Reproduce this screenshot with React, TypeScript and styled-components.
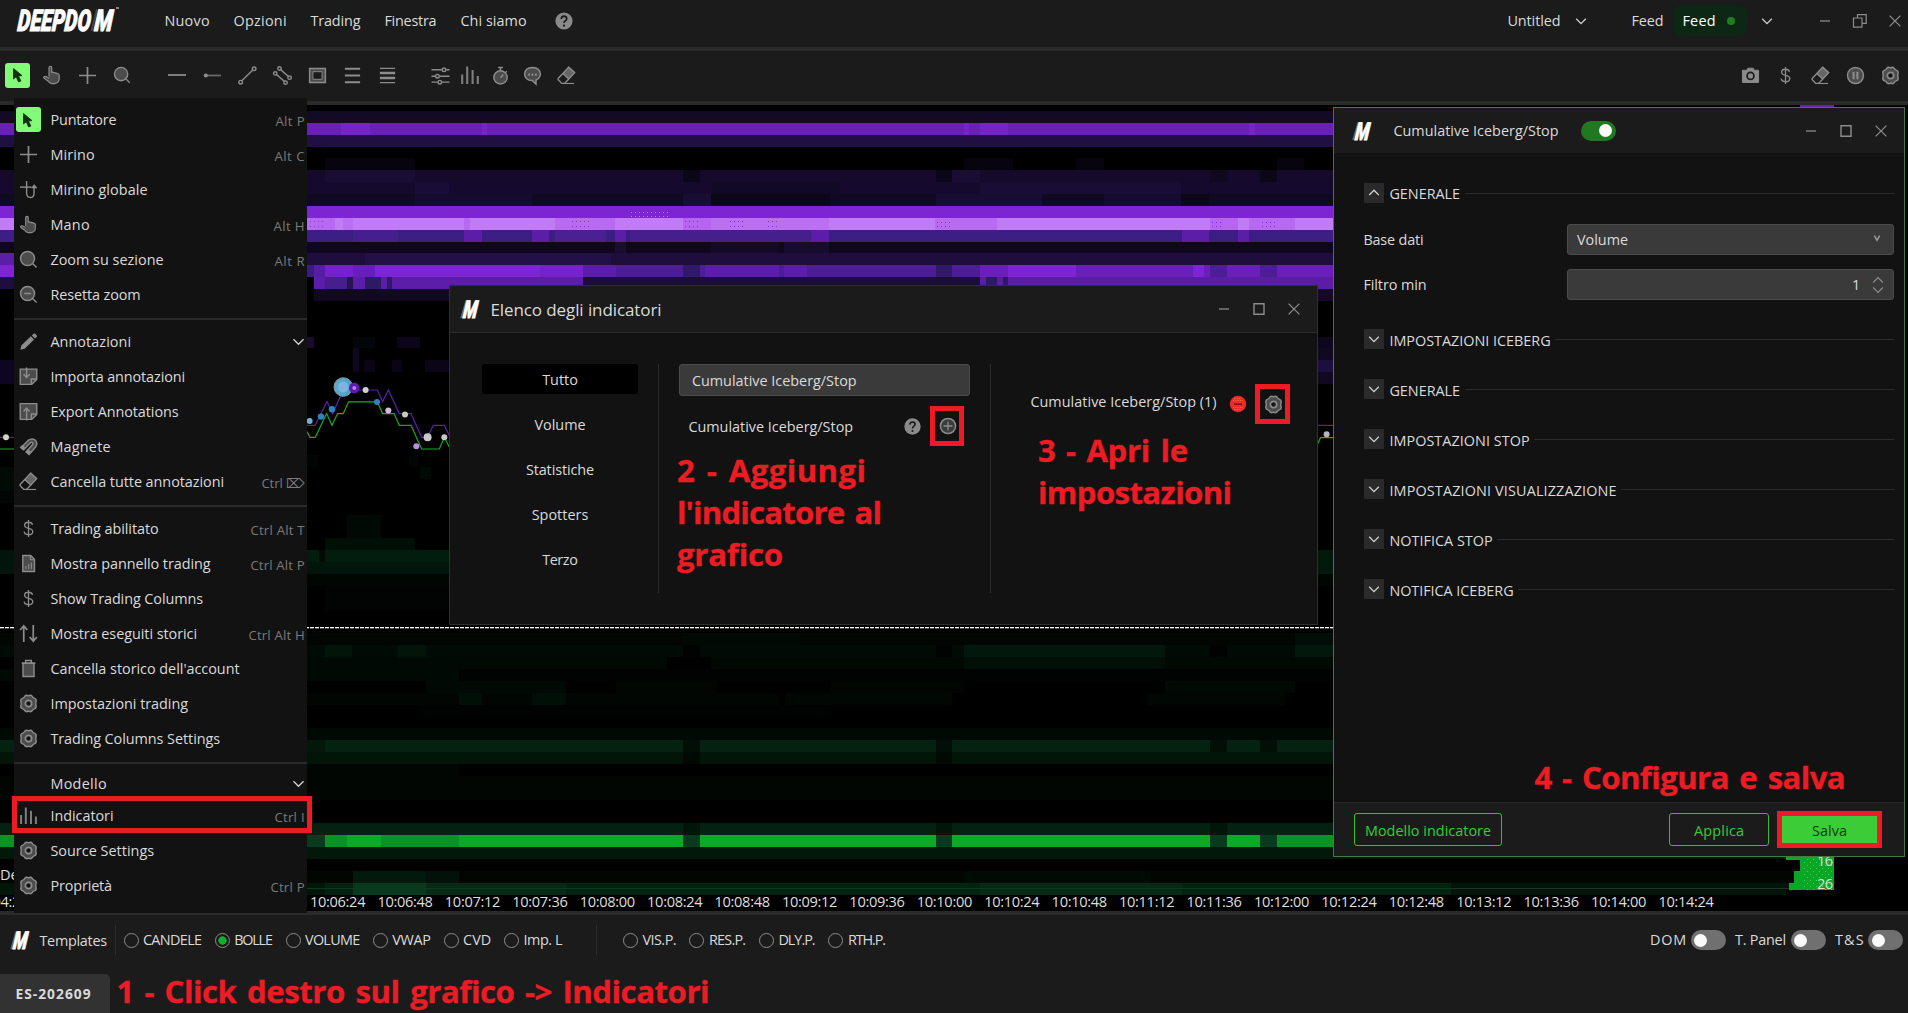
import React, { useLayoutEffect, useRef, useState } from 'react';
import styled, { createGlobalStyle } from 'styled-components';

const RED = '#ed1c24';
const UI_FONT = '"Open Sans", "Noto Sans", "DejaVu Sans", sans-serif';

const GlobalStyle = createGlobalStyle`
  html, body { margin: 0; padding: 0; background: #000; overflow: hidden; }
  * { box-sizing: border-box; }
  body { font-family: ${UI_FONT}; font-size: 14.4px; color: #dadada; }
`;

/* ---------- text set to a fixed measure ---------- */

const MeasureBox = styled.span<{ $w: number }>`
  display: block;
  flex: none;
  width: ${(p) => p.$w}px;
  text-indent: -0.6px;
  white-space: pre;
`;

function Fit({ w, children }: { w: number; children: string }) {
  const ref = useRef<HTMLSpanElement>(null);
  const [spacing, setSpacing] = useState(0);
  useLayoutEffect(() => {
    if (!ref.current) return;
    const natural = ref.current.getBoundingClientRect().width;
    setSpacing((w + 1.2 - natural) / Math.max(1, children.length - 1));
  }, [w, children]);
  return (
    <MeasureBox $w={w}>
      <span ref={ref} style={{ letterSpacing: spacing }}>{children}</span>
    </MeasureBox>
  );
}

/* ---------- icons ---------- */

const Icon = styled.svg<{ $size?: number }>`
  display: block;
  flex: none;
  width: ${(p) => p.$size ?? 20}px;
  height: ${(p) => p.$size ?? 20}px;
  fill: none;
  stroke: #8c8c8c;
  stroke-width: 1.5;
  overflow: visible;
`;

const SOFT = '#4c4c4c';

const glyphs: Record<string, React.ReactNode> = {
  pointer: (
    <path d="M5.5 3.5 L5.5 14 L8.2 11.8 L10.6 17 L12.9 16 L10.5 11 L14 10.6 Z" fill="#10300f" stroke="#10300f" strokeWidth="0.8" />
  ),
  hand: (
    <path
      d="M7 11.5 V3 q0-1.6 1.4-1.6 q1.3 0 1.3 1.6 V7.4 q1.2-.6 2 .3 q1.2-.5 2 .5 q1.2-.4 2 .7 q1.4-.2 1.5 1.4 V14 q-.3 4-4.5 4.6 H9.6 Q7.4 18.2 6 16 L2 13.2 q-.8-1.3.4-1.7 q1.4-.3 2.6.5 L7 13.2"
      fill={SOFT}
      strokeWidth="1.2"
    />
  ),
  plus: <path d="M10 1 V19 M1 10 H19" strokeWidth="1.8" />,
  globalCross: (
    <>
      <path d="M8 1 V14 q.3 4.4 4 4.4 q3.6 0 3.8-4 V7" />
      <path d="M1 7.5 H13" />
      <path d="M13 8.5 L16 4.8 L19 8.5 Z" fill="#8c8c8c" strokeWidth=".6" />
    </>
  ),
  zoom: (
    <>
      <circle cx="9" cy="9" r="7.4" fill={SOFT} />
      <path d="M14.5 14.5 L18.5 18.5" />
    </>
  ),
  zoomOut: (
    <>
      <circle cx="9" cy="9" r="7.4" fill={SOFT} />
      <path d="M14.5 14.5 L18.5 18.5 M5.5 9 H12.5" />
    </>
  ),
  line: <path d="M1 10 H19" strokeWidth="1.8" />,
  ray: (
    <>
      <path d="M3 10 H19" stroke="#6b6b6b" strokeWidth="1.8" />
      <circle cx="3" cy="10" r="2.2" fill="#8c8c8c" stroke="none" />
    </>
  ),
  trend: (
    <>
      <path d="M4 15.6 L15.6 4.3" />
      <circle cx="2.8" cy="17" r="1.9" />
      <circle cx="17" cy="3" r="1.9" />
    </>
  ),
  channel: (
    <>
      <path d="M8 3.8 L16.3 11 M3.6 9 L12 16.2" />
      <circle cx="6.8" cy="2.6" r="1.8" />
      <circle cx="17.5" cy="12.3" r="1.8" />
      <circle cx="2.4" cy="7.8" r="1.8" />
      <circle cx="13.2" cy="17.5" r="1.8" />
    </>
  ),
  rect: (
    <>
      <path d="M1.7 2.7 H18.3 V17.3 H1.7 Z" fill={SOFT} />
      <path d="M5.2 6 H14.8 V14 H5.2 Z" fill="#1b1b1b" strokeWidth="1" />
    </>
  ),
  lines3: <path d="M2 3 H18 M2 10 H18 M2 17 H18" strokeWidth="2.1" />,
  lines4: (
    <>
      <path d="M2 2.6 H18 M2 17.6 H18" strokeWidth="1.3" />
      <path d="M2 7.4 H18 M2 12.6 H18" strokeWidth="2.8" />
    </>
  ),
  sliders: (
    <>
      <path d="M0.5 4 H11.5 M16 4 H19.5 M0.5 10.7 H4.5 M9 10.7 H19.5 M0.5 17 H7 M11.5 17 H19.5" />
      <circle cx="13.7" cy="4" r="1.9" />
      <circle cx="6.7" cy="10.7" r="1.9" />
      <circle cx="9.3" cy="17" r="1.9" />
    </>
  ),
  bars: (
    <path d="M2.2 19 V9.5 M7.2 19 V1.5 M12.6 19 V5 M17.8 19 V11" strokeWidth="2.1" stroke="#7e7e7e" />
  ),
  stopwatch: (
    <>
      <circle cx="10" cy="12" r="7" fill={SOFT} />
      <path d="M7.5 1.5 H12.5 M10 2 V5 M10 12.5 L13 9 M15.5 5.5 L16.7 6.7" />
    </>
  ),
  chat: (
    <>
      <path d="M10 1.5 q8 .2 8.3 7 q-.2 4.6-4.6 6.2 V19 L9.6 15.3 Q2 15 1.7 8.4 Q2 1.8 10 1.5 Z" fill={SOFT} />
      <path d="M5.7 9 h1.4 M9.3 9 h1.4 M12.9 9 h1.4" strokeWidth="1.8" stroke="#b0b0b0" />
    </>
  ),
  eraser: (
    <>
      <path d="M12.2 1.2 L18.6 7 L12.4 13.6 L6.2 7.8 Z" fill="#666" />
      <path d="M6.2 7.8 L1.4 12.8 q-.8 1 .2 2 L5 18.3 H8 L12.4 13.6" />
      <path d="M7 18.4 H18" strokeWidth="1.2" />
    </>
  ),
  camera: (
    <>
      <path d="M1.5 4.5 H6 L7.3 2.3 H12.7 L14 4.5 H18.5 V17.3 H1.5 Z" fill="#8c8c8c" strokeWidth="1" strokeLinejoin="round" />
      <circle cx="10" cy="10.4" r="3.6" stroke="#1b1b1b" strokeWidth="1.8" />
      <circle cx="10" cy="10.4" r="1.4" fill="#8c8c8c" stroke="none" />
    </>
  ),
  dollar: (
    <path d="M10 1 V19 M14.2 6.2 Q13.6 3.4 10 3.4 Q6 3.4 5.9 6.4 Q5.9 9.1 10 9.8 Q14.5 10.6 14.5 13.4 Q14.3 16.6 10 16.6 Q5.9 16.5 5.4 13.4" strokeWidth="1.4" />
  ),
  pause: (
    <>
      <circle cx="10" cy="10" r="8.4" fill={SOFT} />
      <path d="M8 6 V14 M12 6 V14" strokeWidth="2.2" />
    </>
  ),
  gear: (
    <>
      <path
        d="M6 2.6 Q7.4 .6 10 2 Q12.6 .6 14 2.6 Q14.6 3.9 16 4.3 Q18.6 5.2 18 8 Q17.4 9 17.8 10 Q17.4 11 18 12 Q18.6 14.8 16 15.7 Q14.6 16.1 14 17.4 Q12.6 19.4 10 18 Q7.4 19.4 6 17.4 Q5.4 16.1 4 15.7 Q1.4 14.8 2 12 Q2.6 11 2.2 10 Q2.6 9 2 8 Q1.4 5.2 4 4.3 Q5.4 3.9 6 2.6 Z"
        fill={SOFT}
        strokeLinejoin="round"
      />
      <circle cx="10" cy="10" r="3.3" fill="#161616" strokeWidth="1.8" />
    </>
  ),
  pencil: (
    <>
      <path d="M1.5 18.7 L2.4 14.3 L12.5 4.6 L15.8 7.9 L6 17.7 Z" fill="#8c8c8c" stroke="none" />
      <path d="M13.5 3.6 L15.6 1.7 q.8-.5 1.4.2 L18.7 3.6 q.5.7 0 1.3 L16.8 6.9 Z" fill="#8c8c8c" stroke="none" />
    </>
  ),
  importNote: (
    <>
      <path d="M1.3 2.2 H18.7 V13 L13.5 18.3 H1.3 Z" fill={SOFT} />
      <path d="M18.7 12.6 H13 V18.3" />
      <path d="M8 0.5 V10.5 M4.8 7.6 L8 11 L11.2 7.6" />
    </>
  ),
  exportNote: (
    <>
      <path d="M1.3 1.7 H18.7 V13 L13.5 18.3 H1.3 Z" fill={SOFT} />
      <path d="M18.7 12.6 H13 V18.3" />
      <path d="M8 19.5 V6.5 M4.8 10 L8 6.3 L11.2 10" />
    </>
  ),
  magnet: (
    <>
      <path d="M2.5 11 L9.5 3.6 Q14.3 .3 17.6 3.8 Q20.3 7.3 16.8 11.4 L10.6 18.4 L7.4 15.6 L13.6 8.6 Q15.2 6.8 14 5.8 Q12.8 4.9 11.4 6.6 L5 13.4 Z" fill={SOFT} />
      <path d="M0.6 11 L3.5 8.2 L6.8 11.2 L4.2 14 Z M7.3 15.7 L9.8 13 L13 15.8 L10.5 18.6 Z" fill="#8c8c8c" stroke="none" />
    </>
  ),
  doc: (
    <>
      <path d="M4 1.5 H12.3 L16.3 5.5 V18.5 H4 Z" fill={SOFT} />
      <path d="M12 1.5 V6 H16.3 M7.3 16 V12.5 M10.2 16 V10.5 M13.1 16 V9" strokeWidth="1.2" />
    </>
  ),
  updown: (
    <path d="M5 19 V2.5 M1.2 6.3 L5 2 L8.8 6.3 M15 1 V17.5 M11.2 13.7 L15 18 L18.8 13.7" strokeWidth="1.8" />
  ),
  trash: (
    <>
      <path d="M4.2 4.5 H15.8 V18.5 H4.2 Z" fill={SOFT} />
      <path d="M2.8 4.5 H17.2 M7 4 V1.5 H13 V4" />
    </>
  ),
  help: (
    <>
      <circle cx="10" cy="10" r="8.6" fill="#8a8a8a" stroke="none" />
      <path d="M7.3 8 Q7.4 5.2 10 5.2 Q12.7 5.3 12.7 7.6 Q12.6 9 11.2 9.9 Q10 10.6 10 12.1" stroke="#181818" strokeWidth="1.7" />
      <circle cx="10" cy="14.7" r="1.1" fill="#181818" stroke="none" />
    </>
  ),
  add: (
    <>
      <circle cx="10" cy="10" r="7.6" fill="#3c3c3c" />
      <path d="M10 5.6 V14.4 M5.6 10 H14.4" strokeWidth="1.3" />
    </>
  ),
  remove: (
    <>
      <circle cx="10" cy="10" r="8.2" fill="#ee2a2c" stroke="none" />
      <path d="M6.5 4.5 h7 M5 6.5 h10 M5 13.5 h10 M6.5 15.5 h7" stroke="#d98a2e" strokeWidth="1" strokeDasharray="1 1.4" />
      <path d="M6 10.2 H14" stroke="#7a1010" strokeWidth="1.5" />
    </>
  ),
  chevron: <path d="M5.2 7.8 L10 12.6 L14.8 7.8" stroke="#cfcfcf" strokeWidth="1.3" />,
  chevronUp: <path d="M5.2 12 L10 7.2 L14.8 12" stroke="#cfcfcf" strokeWidth="1.3" />,
  caret: <path d="M7.4 5.6 L10 10.4 L12.6 5.6" stroke="#a0a0a0" strokeWidth="1.4" />,
  minimize: <path d="M5 10 H15" strokeWidth="1.3" />,
  maximize: <path d="M5 4.7 H15 V15.2 H5 Z" strokeWidth="1.4" />,
  restore: <path d="M3.5 7 H12 V16.2 H3.5 Z M7.5 7 V3.6 H16.2 V12.4 H12" strokeWidth="1.2" />,
  close: <path d="M4.6 4.6 L15.4 15.4 M15.4 4.6 L4.6 15.4" strokeWidth="1.3" />,
};

function Glyph({ name, size = 20 }: { name: string; size?: number }) {
  return (
    <Icon viewBox="0 0 20 20" $size={size}>
      {glyphs[name]}
    </Icon>
  );
}

const LogoText = styled.text`
  font-family: Roboto, "Liberation Sans", sans-serif;
  font-weight: 900;
  font-style: italic;
  fill: #fff;
  stroke: #fff;
  stroke-width: 0.9;
`;

const LogoSvg = styled.svg`
  display: block;
  flex: none;
  overflow: visible;
`;

function Mark() {
  return (
    <LogoSvg width="20" height="20">
      <path d="M0 19 L5.2 1.5 M2 19 L7 1.5" stroke="#666" strokeWidth="1.5" />
      <LogoText x="1.4" y="19" fontSize="24.5" textLength="14" lengthAdjust="spacingAndGlyphs" transform="translate(2.4 0) skewX(-7)">M</LogoText>
    </LogoSvg>
  );
}

/* ---------- frame ---------- */

const Screen = styled.div`
  position: relative;
  display: flex;
  flex-direction: column;
  width: 1908px;
  height: 1013px;
  overflow: hidden;
  background: #1b1b1b;
`;

const Bar = styled.div<{ $h: number; $line?: 'top' | 'bottom' }>`
  display: flex;
  flex: none;
  align-items: center;
  justify-content: space-between;
  height: ${(p) => p.$h}px;
  background: #1b1b1b;
  border-${(p) => p.$line ?? 'bottom'}: 4px solid #2a2a2a;
`;

const Group = styled.div<{ $pad?: string; $gap?: number }>`
  display: flex;
  align-items: center;
  padding: ${(p) => p.$pad ?? '0'};
  gap: ${(p) => p.$gap ?? 0}px;
`;

const MenuNames = styled(Group)`
  padding-left: 46px;
  gap: 25px;
  line-height: 20px;
`;

const Slot = styled.span<{ $w?: number; $ml?: number }>`
  display: flex;
  flex: none;
  justify-content: center;
  align-items: center;
  width: ${(p) => p.$w ?? 35}px;
  margin-left: ${(p) => p.$ml ?? 0}px;
`;

const ActiveTool = styled.span`
  display: flex;
  flex: none;
  align-items: center;
  justify-content: center;
  width: 25px;
  height: 25px;
  border-radius: 3px;
  background: #84fb78;
`;

const FeedPill = styled.span`
  display: flex;
  align-items: center;
  justify-content: space-between;
  width: 75px;
  height: 31px;
  padding: 0 13px 0 10px;
  margin: 0 8px 0 10px;
  border-radius: 10px;
  background: #0c2814;
  color: #fff;
`;

const Dot = styled.i`
  width: 8px;
  height: 8px;
  border-radius: 50%;
  background: #1f7f1f;
`;

function TitleBar() {
  return (
    <Bar $h={51}>
      <Group $pad="0 0 6px 17px">
        <LogoSvg width="102" height="24">
          <LogoText x="0" y="22" fontSize="30" textLength="73" lengthAdjust="spacingAndGlyphs" transform="translate(2 0) skewX(-5)">DEEPDO</LogoText>
          <path d="M74.5 22 L80 0.5" stroke="#444" strokeWidth="2" />
          <path d="M77 22 L82.5 0.5" stroke="#8a8a8a" strokeWidth="1.8" />
          <LogoText x="77" y="22" fontSize="30" textLength="18" lengthAdjust="spacingAndGlyphs" transform="translate(2 0) skewX(-5)">M</LogoText>
          <path d="M99 -1 h3" stroke="#aaa" strokeWidth="1.5" />
        </LogoSvg>
        <MenuNames>
          <Fit w={44}>Nuovo</Fit>
          <Fit w={52}>Opzioni</Fit>
          <Fit w={49}>Trading</Fit>
          <Fit w={51}>Finestra</Fit>
          <Fit w={65}>Chi siamo</Fit>
        </MenuNames>
        <Slot $w={20} $ml={28}><Glyph name="help" /></Slot>
      </Group>
      <Group $pad="0 3px 6px 0">
        <Fit w={52}>Untitled</Fit>
        <Slot $w={22} $ml={10}><Glyph name="chevron" /></Slot>
        <Slot $w={40}> </Slot>
        <Fit w={31}>Feed</Fit>
        <FeedPill><Fit w={32}>Feed</Fit><Dot /></FeedPill>
        <Slot $w={22}><Glyph name="chevron" /></Slot>
        <Slot $ml={29}><Glyph name="minimize" /></Slot>
        <Slot><Glyph name="restore" /></Slot>
        <Slot $w={20} $ml={8}><Glyph name="close" /></Slot>
      </Group>
    </Bar>
  );
}

function ToolBar() {
  return (
    <Bar $h={54}>
      <Group $pad="0 0 2px 5px">
        <ActiveTool><Glyph name="pointer" /></ActiveTool>
        <Slot $ml={4.5}><Glyph name="hand" /></Slot>
        <Slot><Glyph name="plus" size={19} /></Slot>
        <Slot><Glyph name="zoom" size={18} /></Slot>
        <Slot $ml={20}><Glyph name="line" /></Slot>
        {['ray', 'trend', 'channel', 'rect', 'lines3', 'lines4'].map((n) => (
          <Slot key={n}><Glyph name={n} size={19} /></Slot>
        ))}
        <Slot $w={30} $ml={20.5}><Glyph name="sliders" size={19} /></Slot>
        <Slot $w={30}><Glyph name="bars" /></Slot>
        <Slot $w={31}><Glyph name="stopwatch" size={19} /></Slot>
        <Slot $w={33}><Glyph name="chat" size={19} /></Slot>
        <Slot><Glyph name="eraser" size={19} /></Slot>
      </Group>
      <Group $pad="0 0 2px 0">
        {['camera', 'dollar', 'eraser', 'pause', 'gear'].map((n) => (
          <Slot key={n}><Glyph name={n} size={19} /></Slot>
        ))}
      </Group>
    </Bar>
  );
}

/* ---------- chart ---------- */

const ChartArea = styled.div`
  flex: none;
  height: 806px;
  background: #000;
`;

const ChartSvg = styled.svg`
  display: block;
`;

const AxisText = styled.text`
  font-family: ${UI_FONT};
  font-size: 14.6px;
  fill: #dedede;
`;

type Cell = [number, number, number, number, string]; // x1, x2, y, height, colour

const cells: Cell[] = [
  [0, 1334, 111, 12, '#130a25'],
  [0, 1334, 123, 12, '#6b1fb9'],
  [341, 370, 123, 12, '#7524c6'],
  [482, 487, 123, 12, '#7524c6'],
  [964, 969, 123, 12, '#7524c6'],
  [980, 1008, 123, 12, '#7524c6'],
  [1249, 1255, 123, 12, '#7524c6'],
  [0, 1334, 135, 12, '#200f43'],
  [325, 415, 158, 12, '#07040f'],
  [964, 1013, 158, 12, '#07040f'],
  [1076, 1104, 158, 12, '#07040f'],
  [1277, 1304, 158, 12, '#07040f'],
  [0, 1334, 170, 12, '#150a2c'],
  [325, 415, 170, 12, '#190d33'],
  [683, 700, 170, 12, '#0b0618'],
  [936, 952, 170, 12, '#0b0618'],
  [952, 980, 170, 12, '#190d33'],
  [1210, 1227, 170, 12, '#0f081f'],
  [1260, 1277, 170, 12, '#0b0618'],
  [0, 1334, 182, 12, '#150a2e'],
  [415, 449, 182, 12, '#190c36'],
  [711, 840, 182, 12, '#120926'],
  [980, 1181, 182, 12, '#190d35'],
  [0, 1334, 194, 12, '#110822'],
  [415, 532, 194, 12, '#160b2e'],
  [683, 711, 194, 12, '#190d33'],
  [711, 830, 194, 12, '#0c0618'],
  [936, 1042, 194, 12, '#180c33'],
  [1104, 1181, 194, 12, '#160b2e'],
  [1181, 1209, 194, 12, '#0c0618'],
  [0, 1334, 206, 12, '#7d25d2'],
  [0, 1334, 218, 12, '#c17bf5'],
  [307, 335, 218, 12, '#b769ef'],
  [343, 353, 218, 12, '#ba70f1'],
  [464, 470, 218, 12, '#b769ef'],
  [555, 615, 218, 12, '#b86bf0'],
  [615, 626, 218, 12, '#c17bf5'],
  [683, 711, 218, 12, '#b565ee'],
  [711, 829, 218, 12, '#bb70f2'],
  [935, 997, 218, 12, '#b86bf0'],
  [1171, 1210, 218, 12, '#c17bf5'],
  [1210, 1238, 218, 12, '#b565ee'],
  [1249, 1295, 218, 12, '#b769ef'],
  [0, 1334, 230, 12, '#3d1e84'],
  [353, 398, 230, 12, '#451f8d'],
  [464, 482, 230, 12, '#5c1ea8'],
  [532, 549, 230, 12, '#5c1ea8'],
  [555, 606, 230, 12, '#4a2092'],
  [615, 626, 230, 12, '#5c1ea8'],
  [630, 811, 230, 12, '#461f8c'],
  [811, 829, 230, 12, '#5c1ea8'],
  [1182, 1209, 230, 12, '#5c1ea8'],
  [1238, 1249, 230, 12, '#5c1ea8'],
  [0, 1334, 242, 11, '#0f071e'],
  [615, 626, 242, 11, '#190d30'],
  [711, 779, 242, 11, '#140a28'],
  [784, 829, 242, 11, '#180c2e'],
  [0, 1334, 253, 12, '#1d0e3e'],
  [365, 611, 253, 12, '#221048'],
  [0, 14, 253, 12, '#5c1ea8'],
  [0, 14, 265, 12, '#7d25d2'],
  [0, 14, 277, 12, '#1d0e3e'],
  [307, 314, 265, 12, '#3a1b80'],
  [314, 325, 265, 12, '#561ea2'],
  [325, 583, 265, 12, '#7622ca'],
  [353, 375, 265, 12, '#681ebb'],
  [375, 540, 265, 12, '#7d25d2'],
  [583, 616, 265, 12, '#5c1ea8'],
  [616, 683, 265, 12, '#4d1d95'],
  [683, 700, 265, 12, '#301a68'],
  [700, 705, 265, 12, '#4d1d95'],
  [705, 779, 265, 12, '#5c1ea8'],
  [779, 784, 265, 12, '#4d1d95'],
  [784, 807, 265, 12, '#5c1ea8'],
  [807, 936, 265, 12, '#4d1d95'],
  [936, 952, 265, 12, '#301a68'],
  [952, 980, 265, 12, '#4d1d95'],
  [980, 1334, 265, 12, '#6b1fb9'],
  [1008, 1076, 265, 12, '#7d25d2'],
  [1193, 1204, 265, 12, '#7d25d2'],
  [1210, 1227, 265, 12, '#4d1d95'],
  [1260, 1277, 265, 12, '#4d1d95'],
  [314, 583, 277, 12, '#5c1ea8'],
  [325, 347, 277, 12, '#461f8c'],
  [347, 353, 277, 12, '#261550'],
  [365, 381, 277, 12, '#2c1a63'],
  [387, 392, 277, 12, '#2c1a63'],
  [583, 980, 277, 12, '#1a0d39'],
  [980, 1334, 277, 12, '#5a1ea6'],
  [986, 997, 277, 12, '#2c1a63'],
  [1003, 1008, 277, 12, '#2c1a63'],
  [314, 449, 289, 12, '#110822'],
  [1318, 1334, 289, 12, '#140a28'],
  [307, 314, 337, 11, '#1a0b32'],
  [353, 375, 337, 11, '#02060a'],
  [397, 420, 337, 11, '#0c061c'],
  [353, 359, 348, 24, '#0f0622'],
  [364, 375, 360, 12, '#0a0516'],
  [392, 402, 360, 12, '#0a0516'],
  [425, 449, 360, 12, '#0b0518'],
  [1318, 1334, 337, 11, '#0d061c'],
  [1318, 1334, 348, 12, '#110822'],
  [1318, 1334, 360, 12, '#1d0e40'],
  [1318, 1334, 372, 12, '#110822'],
  [0, 14, 360, 24, '#0e0620'],
  [0, 14, 467, 24, '#010a05'],
  [307, 318, 455, 12, '#010503'],
  [409, 418, 455, 12, '#010503'],
  [420, 431, 467, 12, '#010a05'],
  [0, 14, 491, 12, '#010503'],
  [347, 381, 515, 23, '#010904'],
  [325, 415, 538, 12, '#010f06'],
  [0, 14, 550, 24, '#02150a'],
  [307, 449, 550, 12, '#021d0e'],
  [319, 325, 550, 12, '#010a05'],
  [307, 449, 562, 12, '#02150a'],
  [307, 449, 574, 12, '#010603'],
  [325, 449, 586, 24, '#010402'],
  [1318, 1334, 550, 24, '#02190c'],
  [1318, 1334, 574, 12, '#010603'],
  [0, 1334, 633, 12, '#010603'],
  [683, 800, 633, 12, '#010904'],
  [1295, 1334, 633, 12, '#010d06'],
  [0, 1334, 645, 12, '#010b05'],
  [325, 352, 645, 12, '#021509'],
  [398, 426, 645, 12, '#021509'],
  [683, 700, 645, 12, '#000302'],
  [936, 952, 645, 12, '#000302'],
  [964, 1165, 645, 12, '#02180d'],
  [1210, 1227, 645, 12, '#000302'],
  [1295, 1334, 645, 12, '#02180d'],
  [307, 667, 657, 12, '#010904'],
  [711, 964, 657, 12, '#010804'],
  [964, 1165, 657, 12, '#010f06'],
  [1165, 1334, 657, 12, '#010904'],
  [0, 459, 669, 12, '#010904'],
  [459, 1334, 669, 12, '#000302'],
  [426, 566, 681, 12, '#010904'],
  [616, 717, 681, 12, '#010603'],
  [830, 964, 681, 12, '#010603'],
  [1165, 1295, 681, 12, '#010904'],
  [307, 779, 693, 12, '#010603'],
  [459, 482, 693, 12, '#011007'],
  [532, 566, 693, 12, '#011007'],
  [785, 952, 693, 12, '#010703'],
  [1148, 1285, 693, 12, '#010703'],
  [420, 830, 705, 12, '#000302'],
  [0, 1334, 728, 12, '#010904'],
  [0, 1334, 740, 12, '#032211'],
  [307, 325, 740, 12, '#02180b'],
  [683, 700, 740, 12, '#010f06'],
  [936, 952, 740, 12, '#010f06'],
  [1210, 1227, 740, 12, '#010f06'],
  [1260, 1277, 740, 12, '#010f06'],
  [0, 1334, 752, 12, '#021509'],
  [683, 700, 752, 12, '#010904'],
  [936, 952, 752, 12, '#010904'],
  [307, 459, 764, 12, '#010603'],
  [0, 1334, 776, 24, '#010603'],
  [0, 1334, 823, 12, '#032211'],
  [683, 700, 823, 12, '#021509'],
  [936, 952, 823, 12, '#021509'],
  [1210, 1227, 823, 12, '#021509'],
  [0, 14, 835, 12, '#089422'],
  [307, 325, 835, 12, '#083a1d'],
  [325, 347, 835, 12, '#089422'],
  [347, 381, 835, 12, '#09ab24'],
  [381, 459, 835, 12, '#089422'],
  [459, 1334, 835, 12, '#09ab24'],
  [683, 700, 835, 12, '#083a1d'],
  [936, 952, 835, 12, '#083a1d'],
  [1210, 1227, 835, 12, '#083a1d'],
  [1260, 1277, 835, 12, '#083a1d'],
  [1277, 1334, 835, 12, '#089422'],
  [0, 1786, 847, 12, '#02180b'],
  [0, 1794, 871, 12, '#010603'],
  [353, 426, 871, 12, '#021a0d'],
  [426, 459, 871, 12, '#02110a'],
  [964, 1150, 871, 12, '#010b05'],
  [0, 1832, 883, 12, '#021509'],
  [325, 353, 883, 12, '#03210f'],
  [353, 426, 883, 12, '#083a1d'],
  [426, 566, 883, 12, '#062a14'],
  [566, 980, 883, 12, '#032311'],
  [980, 1182, 883, 12, '#062a14'],
  [1182, 1451, 883, 12, '#032311'],
];

/* sparse dot clusters inside the brightest rows */
const dotClusters: Cell[] = [
  [310, 324, 221, 6, '#8a3ce0'],
  [572, 592, 221, 6, '#7a30d6'],
  [685, 700, 221, 6, '#7a30d6'],
  [730, 744, 221, 6, '#7a30d6'],
  [768, 778, 221, 6, '#7a30d6'],
  [937, 950, 222, 5, '#7a30d6'],
  [1212, 1224, 222, 5, '#7a30d6'],
  [1262, 1276, 222, 5, '#7a30d6'],
  [631, 671, 212, 5, '#c07af2'],
];

const purple: [number, number][] = [
  [307, 425.3], [315, 425.3], [327, 401.6], [332.6, 413.6], [343.3, 390], [377.3, 390], [382.6, 401.6], [388.3, 390],
  [399.3, 413.6], [411, 413.6], [421.6, 437.3], [427.6, 437.3], [433.3, 425.3], [444.3, 425.3], [449.3, 435.5],
];
const green: [number, number][] = [
  [307, 431.6], [310, 437.3], [315.3, 437.3], [326.6, 413.6], [332, 425.3], [337.6, 413.6], [343.3, 413.6], [348.6, 401.8],
  [377.3, 401.8], [382.6, 413.6], [394, 413.6], [399.3, 425.3], [411, 425.3], [421.6, 449], [439.3, 449], [444.3, 437.3], [449.3, 447],
];
const pts = (list: [number, number][]) => list.map((p) => p.join(',')).join(' ');

const markers: [number, number, number, string][] = [
  [309.6, 421, 3, '#6fb0dd'],
  [321, 416.6, 3.2, '#2b86c2'],
  [332, 409.3, 3.2, '#2b86c2'],
  [365.6, 390, 3, '#cfcfcf'],
  [377, 402, 3, '#2b86c2'],
  [388.3, 410.6, 3, '#cdbfd6'],
  [405, 414.6, 3, '#c8c8c8'],
  [416.3, 446.3, 3, '#b98fd9'],
  [427.6, 437.3, 4, '#c8c8c8'],
  [444.3, 437.3, 3, '#c8c8c8'],
  [6, 437.3, 3, '#d2d2d2'],
  [1326.6, 434.3, 3, '#b8b8b8'],
];

const pad2 = (n: number) => String(n).padStart(2, '0');
const timeLabels = Array.from({ length: 26 }, (_, i) => {
  const secs = 4 * 60 + 24 + i * 24;
  return { x: -27.1 + i * 67.42, text: `10:${pad2(Math.floor(secs / 60))}:${pad2(secs % 60)}` };
});

function Chart() {
  return (
    <ChartArea>
      <ChartSvg width="1908" height="806" viewBox="0 105 1908 806">
        <defs>
          <pattern id="lit" width="6" height="6" patternUnits="userSpaceOnUse">
            <rect x="1" y="1" width="1" height="1" fill="#48c860" />
            <rect x="4" y="4" width="1" height="1" fill="#48c860" />
          </pattern>
          <linearGradient id="glow" x1="0" y1="0" x2="1" y2="0">
            <stop offset="0" stopColor="#56aecb" />
            <stop offset="1" stopColor="#4b9fd0" />
          </linearGradient>
        </defs>
        <g shapeRendering="crispEdges">
          {cells.map(([x1, x2, y, h, c], i) => (
            <rect key={i} x={x1} y={y} width={x2 - x1} height={h} fill={c} />
          ))}
          {dotClusters.map(([x1, x2, y, h, c], i) => (
            <g key={i} stroke={c} strokeWidth="1" strokeDasharray="1 3">
              <path d={`M${x1} ${y + 0.5} H${x2} M${x1} ${y + h - 0.5} H${x2}`} />
            </g>
          ))}
          <path d="M307 888.5 H1800" stroke="#0c3a1e" />
          <path d="M1451 888.5 H1789" stroke="#24302a" />
          <rect x="1800" y="105" width="34" height="3" fill="#6b1fb9" />
          <path d="M1786 856 H1834 V895 H1789 V883 H1794 V871 H1800 V860 H1786 Z" fill="#09a824" />
          <rect x="1802" y="858" width="30" height="32" fill="url(#lit)" />
          <rect x="1786" y="890" width="50" height="6" fill="#010603" />
          <path d="M0 627.5 H1334" stroke="#ffffff" strokeWidth="1" strokeDasharray="4 1" />
          <path d="M0 628.5 H1334" stroke="#555" strokeWidth="1" strokeDasharray="4 1" />
        </g>
        <g fill="none" strokeWidth="1.2">
          <polyline points={pts(purple)} stroke="#5a1fb0" />
          <polyline points={pts(green)} stroke="#12ad28" />
          <path d="M0 437.3 H14 M1318 425.3 H1334" stroke="#5a1fb0" />
          <path d="M0 449 H14 M1317 445.5 L1320.5 437.6 H1334" stroke="#12ad28" />
        </g>
        <circle cx="343.3" cy="387" r="9.3" fill="url(#glow)" stroke="#8a9499" strokeWidth="1" />
        <circle cx="343.3" cy="387" r="5.4" fill="#7fb4dd" />
        <circle cx="354.3" cy="388" r="5.4" fill="#581ea4" />
        <circle cx="354.3" cy="388" r="2" fill="#d070ff" />
        {markers.map(([x, y, r, c], i) => (
          <circle key={i} cx={x} cy={y} r={r} fill={c} />
        ))}
        {timeLabels.map((t) => (
          <AxisText key={t.text} x={t.x} y="906.5" textLength="55.5">{t.text}</AxisText>
        ))}
        <AxisText x="0" y="880">Delta</AxisText>
        <AxisText x="1817" y="865.5" textLength="16">16</AxisText>
        <AxisText x="1817" y="889" textLength="16">26</AxisText>
      </ChartSvg>
    </ChartArea>
  );
}

/* ---------- bottom bars ---------- */

const Radio = styled.span`
  display: flex;
  align-items: center;
  gap: 5px;
  line-height: 20px;
`;

const Ring = styled.i<{ $on?: boolean }>`
  flex: none;
  width: 15px;
  height: 15px;
  border: 1px solid #8c8c8c;
  border-radius: 50%;
  background: ${(p) => (p.$on ? 'radial-gradient(circle, #0bb32b 0 3.9px, transparent 4.4px)' : 'transparent')};
`;

const BarRule = styled.i<{ $margin: string }>`
  width: 1px;
  height: 30px;
  margin: ${(p) => p.$margin};
  background: #2c2c2c;
`;

const Switch = styled.span<{ $on?: boolean }>`
  display: flex;
  flex: none;
  align-items: center;
  justify-content: ${(p) => (p.$on ? 'flex-end' : 'flex-start')};
  width: 35px;
  height: 20px;
  padding: 0 3.5px;
  border-radius: 10px;
  background: ${(p) => (p.$on ? '#207820' : '#707070')};
  &::after {
    content: '';
    width: 13px;
    height: 13px;
    border-radius: 50%;
    background: #fafafa;
  }
`;

const chartTypes: [string, number][] = [['CANDELE', 58], ['BOLLE', 37.5], ['VOLUME', 54], ['VWAP', 37.5], ['CVD', 27], ['Imp. L', 38]];
const profiles: [string, number][] = [['VIS.P.', 33], ['RES.P.', 36], ['DLY.P.', 36], ['RTH.P.', 37]];
const panels: [string, number][] = [['DOM', 35], ['T. Panel', 50], ['T&S', 27.5]];

function TemplatesBar() {
  return (
    <Bar $h={58} $line="top">
      <Group $pad="0 0 4px 11px">
        <Mark />
        <Slot $w={9}> </Slot>
        <Fit w={66.5}>Templates</Fit>
        <BarRule $margin="0 8px" />
        <Group $gap={13.3}>
          {chartTypes.map(([t, w]) => (
            <Radio key={t}><Ring $on={t === 'BOLLE'} /><Fit w={w}>{t}</Fit></Radio>
          ))}
        </Group>
        <BarRule $margin="0 26px 0 34px" />
        <Group $gap={13.5}>
          {profiles.map(([t, w]) => (
            <Radio key={t}><Ring /><Fit w={w}>{t}</Fit></Radio>
          ))}
        </Group>
      </Group>
      <Group $pad="0 5px 4px 0" $gap={10}>
        {panels.map(([t, w]) => (
          <Radio key={t}><Fit w={w}>{t}</Fit><Switch /></Radio>
        ))}
      </Group>
    </Bar>
  );
}

const TabStrip = styled.div`
  display: flex;
  flex: 1;
  align-items: flex-end;
  background: #1b1b1b;
`;

const Tab = styled.div`
  width: 110px;
  height: 39px;
  padding: 0 16px;
  border-radius: 0 5px 0 0;
  background: #323232;
  font-size: 13.8px;
  font-weight: 700;
  line-height: 40px;
`;

/* ---------- context menu ---------- */

const ContextMenu = styled.div`
  position: absolute;
  left: 14px;
  top: 98px;
  width: 293px;
  height: 815px;
  padding-top: 4px;
  background: #121212;
`;

const Row = styled.div<{ $h?: number }>`
  display: flex;
  align-items: center;
  height: ${(p) => p.$h ?? 35}px;
  padding-right: 3px;
`;

const RowIcon = styled.span`
  display: flex;
  flex: none;
  justify-content: center;
  width: 28px;
  margin-right: 9px;
`;

const RowText = styled.span`
  flex: 1;
`;

const Keys = styled.span`
  padding-top: 2px;
  font-size: 13.2px;
  color: #7a7a7a;
`;

const MenuRule = styled.div`
  height: 2px;
  margin: 6px 0 4px;
  background: #2a2a2a;
`;

type MenuItem = { icon?: string; text: string; w: number; keys?: string; kw?: number; sub?: boolean; h?: number } | null;

const menu: MenuItem[] = [
  { icon: 'pointer', text: 'Puntatore', w: 65, keys: 'Alt P', kw: 28 },
  { icon: 'plus', text: 'Mirino', w: 43, keys: 'Alt C', kw: 29 },
  { icon: 'globalCross', text: 'Mirino globale', w: 96 },
  { icon: 'hand', text: 'Mano', w: 38, keys: 'Alt H', kw: 30 },
  { icon: 'zoom', text: 'Zoom su sezione', w: 112, keys: 'Alt R', kw: 29 },
  { icon: 'zoomOut', text: 'Resetta zoom', w: 89 },
  null,
  { icon: 'pencil', text: 'Annotazioni', w: 79.5, sub: true },
  { icon: 'importNote', text: 'Importa annotazioni', w: 133.5 },
  { icon: 'exportNote', text: 'Export Annotations', w: 127 },
  { icon: 'magnet', text: 'Magnete', w: 59 },
  { icon: 'eraser', text: 'Cancella tutte annotazioni', w: 172.5, keys: 'Ctrl ⌦', kw: 42 },
  null,
  { icon: 'dollar', text: 'Trading abilitato', w: 107, keys: 'Ctrl Alt T', kw: 53 },
  { icon: 'doc', text: 'Mostra pannello trading', w: 159, keys: 'Ctrl Alt P', kw: 53 },
  { icon: 'dollar', text: 'Show Trading Columns', w: 151.5 },
  { icon: 'updown', text: 'Mostra eseguiti storici', w: 145.5, keys: 'Ctrl Alt H', kw: 55 },
  { icon: 'trash', text: "Cancella storico dell'account", w: 188 },
  { icon: 'gear', text: 'Impostazioni trading', w: 136.5 },
  { icon: 'gear', text: 'Trading Columns Settings', w: 168.5 },
  null,
  { text: 'Modello', w: 55, sub: true, h: 30 },
  { icon: 'bars', text: 'Indicatori', w: 62, keys: 'Ctrl I', kw: 29 },
  { icon: 'gear', text: 'Source Settings', w: 102.5 },
  { icon: 'gear', text: 'Proprietà', w: 60.5, keys: 'Ctrl P', kw: 33 },
];

function ChartMenu() {
  return (
    <ContextMenu>
      {menu.map((m, i) =>
        m === null ? (
          <MenuRule key={i} />
        ) : (
          <Row key={i} $h={m.h}>
            <RowIcon>
              {m.icon === 'pointer' ? (
                <ActiveTool><Glyph name="pointer" /></ActiveTool>
              ) : (
                m.icon && <Glyph name={m.icon} size={19} />
              )}
            </RowIcon>
            <RowText><Fit w={m.w}>{m.text}</Fit></RowText>
            {m.keys && <Keys><Fit w={m.kw ?? 30}>{m.keys}</Fit></Keys>}
            {m.sub && <Slot $w={11}><Glyph name="chevron" size={21} /></Slot>}
          </Row>
        ),
      )}
    </ContextMenu>
  );
}

/* ---------- windows ---------- */

const Win = styled.div<{ $x: number; $y: number; $w: number; $h: number; $edge: string }>`
  position: absolute;
  left: ${(p) => p.$x}px;
  top: ${(p) => p.$y}px;
  display: flex;
  flex-direction: column;
  width: ${(p) => p.$w}px;
  height: ${(p) => p.$h}px;
  border: 1px solid ${(p) => p.$edge};
  background: #121212;
`;

const WinHead = styled.div<{ $h: number; $pad: string; $rule?: boolean }>`
  display: flex;
  flex: none;
  align-items: center;
  height: ${(p) => p.$h}px;
  padding: ${(p) => p.$pad};
  background: #1b1b1b;
  border-bottom: ${(p) => (p.$rule ? '1px solid #2a2a2a' : 'none')};
`;

const WinTitle = styled.div<{ $size?: number; $ml: number }>`
  margin-left: ${(p) => p.$ml}px;
  font-size: ${(p) => p.$size ?? 14.4}px;
`;

const Spacer = styled.span`
  flex: 1;
`;

const Columns = styled.div`
  display: flex;
  padding: 31px 0 0 32px;
`;

const Category = styled.div<{ $on?: boolean }>`
  display: flex;
  align-items: center;
  justify-content: center;
  width: 156px;
  height: 30px;
  margin-bottom: 15px;
  border-radius: 3px;
  background: ${(p) => (p.$on ? '#000' : 'transparent')};
`;

const ColumnRule = styled.i<{ $margin: string }>`
  flex: none;
  width: 1px;
  height: 229px;
  margin: ${(p) => p.$margin};
  background: #2c2c2c;
`;

const Field = styled.div<{ $w: number; $h: number; $pad: string; $end?: boolean }>`
  display: flex;
  flex: none;
  align-items: center;
  justify-content: ${(p) => (p.$end ? 'flex-end' : 'space-between')};
  width: ${(p) => p.$w}px;
  height: ${(p) => p.$h}px;
  padding: ${(p) => p.$pad};
  border: 1px solid #4b4b4b;
  border-radius: 3px;
  background: #3a3a3a;
`;

const AvailableRow = styled.div`
  display: flex;
  align-items: center;
  height: 30px;
  margin-top: 15px;
  padding-left: 10px;
`;

const ActiveRow = styled.div`
  display: flex;
  align-items: center;
  padding: 30px 0 0 40px;
  height: 50px;
`;

const Nudge = styled.div`
  padding-bottom: 5px;
`;

function IndicatorList() {
  return (
    <Win $x={449} $y={285} $w={869} $h={340} $edge="#2f2f2f">
      <WinHead $h={47} $pad="0 6px 0 11px" $rule>
        <Mark />
        <WinTitle $ml={10} $size={17}><Fit w={170}>Elenco degli indicatori</Fit></WinTitle>
        <Spacer />
        <Slot><Glyph name="minimize" /></Slot>
        <Slot><Glyph name="maximize" /></Slot>
        <Slot><Glyph name="close" /></Slot>
      </WinHead>
      <Columns>
        <div>
          <Category $on><Fit w={34.5}>Tutto</Fit></Category>
          <Category><Fit w={50}>Volume</Fit></Category>
          <Category><Fit w={67}>Statistiche</Fit></Category>
          <Category><Fit w={55.5}>Spotters</Fit></Category>
          <Category><Fit w={34.5}>Terzo</Fit></Category>
        </div>
        <ColumnRule $margin="0 20px" />
        <div>
          <Field $w={291} $h={32} $pad="1px 12.5px 0"><Fit w={163.5}>Cumulative Iceberg/Stop</Fit></Field>
          <AvailableRow>
            <Fit w={163.5}>Cumulative Iceberg/Stop</Fit>
            <Slot $ml={42.5}><Glyph name="help" size={19} /></Slot>
            <Slot><Glyph name="add" /></Slot>
          </AvailableRow>
        </div>
        <ColumnRule $margin="0 0 0 20px" />
        <ActiveRow>
          <Nudge><Fit w={185}>Cumulative Iceberg/Stop (1)</Fit></Nudge>
          <Slot $ml={4.5}><Glyph name="remove" /></Slot>
          <Slot><Glyph name="gear" size={19} /></Slot>
        </ActiveRow>
      </Columns>
    </Win>
  );
}

const SettingsBody = styled.div`
  flex: 1;
  padding: 30px 10px 0 30px;
`;

const Section = styled.div`
  display: flex;
  align-items: center;
  height: 20px;
  margin-bottom: 30px;
`;

const FirstSection = styled(Section)`
  margin-bottom: 21px;
`;

const Expander = styled.span`
  display: flex;
  align-items: center;
  justify-content: center;
  width: 20px;
  height: 20px;
  margin-right: 6px;
  background: #2a2a2a;
`;

const SectionName = styled.span`
  padding-top: 2px;
`;

const SectionRule = styled.i`
  flex: 1;
  height: 1px;
  margin-left: 5px;
  background: #2b2b2b;
`;

const Setting = styled.div<{ $mb: number }>`
  display: flex;
  align-items: center;
  justify-content: space-between;
  height: 31px;
  margin-bottom: ${(p) => p.$mb}px;
`;

const Foot = styled.div`
  display: flex;
  flex: none;
  align-items: center;
  height: 54px;
  padding: 0 26px 0 20px;
  background: #1b1b1b;
  border-top: 1px solid #262626;
`;

const Button = styled.div<{ $w: number; $solid?: boolean }>`
  display: flex;
  align-items: center;
  justify-content: center;
  width: ${(p) => p.$w}px;
  height: 33px;
  padding-top: 2px;
  border: 1px solid #2fbf33;
  border-radius: 3px;
  background: ${(p) => (p.$solid ? '#3bcc37' : 'transparent')};
  color: ${(p) => (p.$solid ? '#143a14' : '#35cd39')};
`;

const Gap = styled.span<{ $w: number }>`
  width: ${(p) => p.$w}px;
`;

const sections: [string, number][] = [
  ['IMPOSTAZIONI ICEBERG', 160],
  ['GENERALE', 69.5],
  ['IMPOSTAZIONI STOP', 139],
  ['IMPOSTAZIONI VISUALIZZAZIONE', 226],
  ['NOTIFICA STOP', 102],
  ['NOTIFICA ICEBERG', 123],
];

function SettingsWindow() {
  return (
    <Win $x={1333} $y={107} $w={572} $h={750} $edge="#3f7c3f">
      <WinHead $h={45} $pad="0 6px 0 19px">
        <Mark />
        <WinTitle $ml={21}><Fit w={164}>Cumulative Iceberg/Stop</Fit></WinTitle>
        <Gap $w={22.5} />
        <Switch $on />
        <Spacer />
        <Slot><Glyph name="minimize" /></Slot>
        <Slot><Glyph name="maximize" /></Slot>
        <Slot><Glyph name="close" /></Slot>
      </WinHead>
      <SettingsBody>
        <FirstSection>
          <Expander><Glyph name="chevronUp" /></Expander>
          <Fit w={69.5}>GENERALE</Fit>
          <SectionRule />
        </FirstSection>
        <Setting $mb={14}>
          <Fit w={59}>Base dati</Fit>
          <Field $w={327} $h={31} $pad="0 6px 0 9.5px">
            <Fit w={50}>Volume</Fit>
            <Glyph name="caret" />
          </Field>
        </Setting>
        <Setting $mb={29}>
          <Fit w={62}>Filtro min</Fit>
          <Field $w={327} $h={31} $pad="0 5px 0 0" $end>
            <Fit w={8}>1</Fit>
            <Gap $w={7.5} />
            <Icon viewBox="0 0 20 20">
              <path d="M5.2 7.5 L10 2.7 L14.8 7.5 M5.2 12.5 L10 17.3 L14.8 12.5" strokeWidth="1.2" />
            </Icon>
          </Field>
        </Setting>
        {sections.map(([t, w], i) => (
          <Section key={i}>
            <Expander><Glyph name="chevron" /></Expander>
            <SectionName><Fit w={w}>{t}</Fit></SectionName>
            <SectionRule />
          </Section>
        ))}
      </SettingsBody>
      <Foot>
        <Button $w={148}><Fit w={125}>Modello indicatore</Fit></Button>
        <Spacer />
        <Button $w={100}><Fit w={49}>Applica</Fit></Button>
        <Gap $w={12} />
        <Button $w={97} $solid><Fit w={34}>Salva</Fit></Button>
      </Foot>
    </Win>
  );
}

/* ---------- tutorial callouts ---------- */

const Frame = styled.div<{ $x: number; $y: number; $w: number; $h: number }>`
  position: absolute;
  left: ${(p) => p.$x}px;
  top: ${(p) => p.$y}px;
  width: ${(p) => p.$w}px;
  height: ${(p) => p.$h}px;
  border: 5px solid ${RED};
`;

const Callout = styled.div<{ $x: number; $y: number }>`
  position: absolute;
  left: ${(p) => p.$x}px;
  top: ${(p) => p.$y}px;
  color: ${RED};
  font-size: 31.2px;
  font-weight: 700;
  line-height: 42.3px;
  word-spacing: 3px;
  -webkit-text-stroke: 0.3px ${RED};
`;

export default function App() {
  return (
    <>
      <GlobalStyle />
      <Screen>
        <TitleBar />
        <ToolBar />
        <Chart />
        <TemplatesBar />
        <TabStrip><Tab><Fit w={74}>ES-202609</Fit></Tab></TabStrip>
        <ChartMenu />
        <IndicatorList />
        <SettingsWindow />
        <Frame $x={12} $y={796} $w={300} $h={37} />
        <Frame $x={930} $y={406} $w={34} $h={40} />
        <Frame $x={1255} $y={384} $w={35} $h={40} />
        <Frame $x={1777} $y={811} $w={105} $h={37} />
        <Callout $x={117} $y={970}><Fit w={592}>{'1 - Click destro sul grafico -> Indicatori'}</Fit></Callout>
        <Callout $x={677.5} $y={448.5}>
          <Fit w={188}>2 - Aggiungi</Fit>
          <Fit w={204}>{"l'indicatore al"}</Fit>
          <Fit w={105}>grafico</Fit>
        </Callout>
        <Callout $x={1038.5} $y={428.5}>
          <Fit w={149}>3 - Apri le</Fit>
          <Fit w={193}>impostazioni</Fit>
        </Callout>
        <Callout $x={1535} $y={756}><Fit w={310}>4 - Configura e salva</Fit></Callout>
      </Screen>
    </>
  );
}
